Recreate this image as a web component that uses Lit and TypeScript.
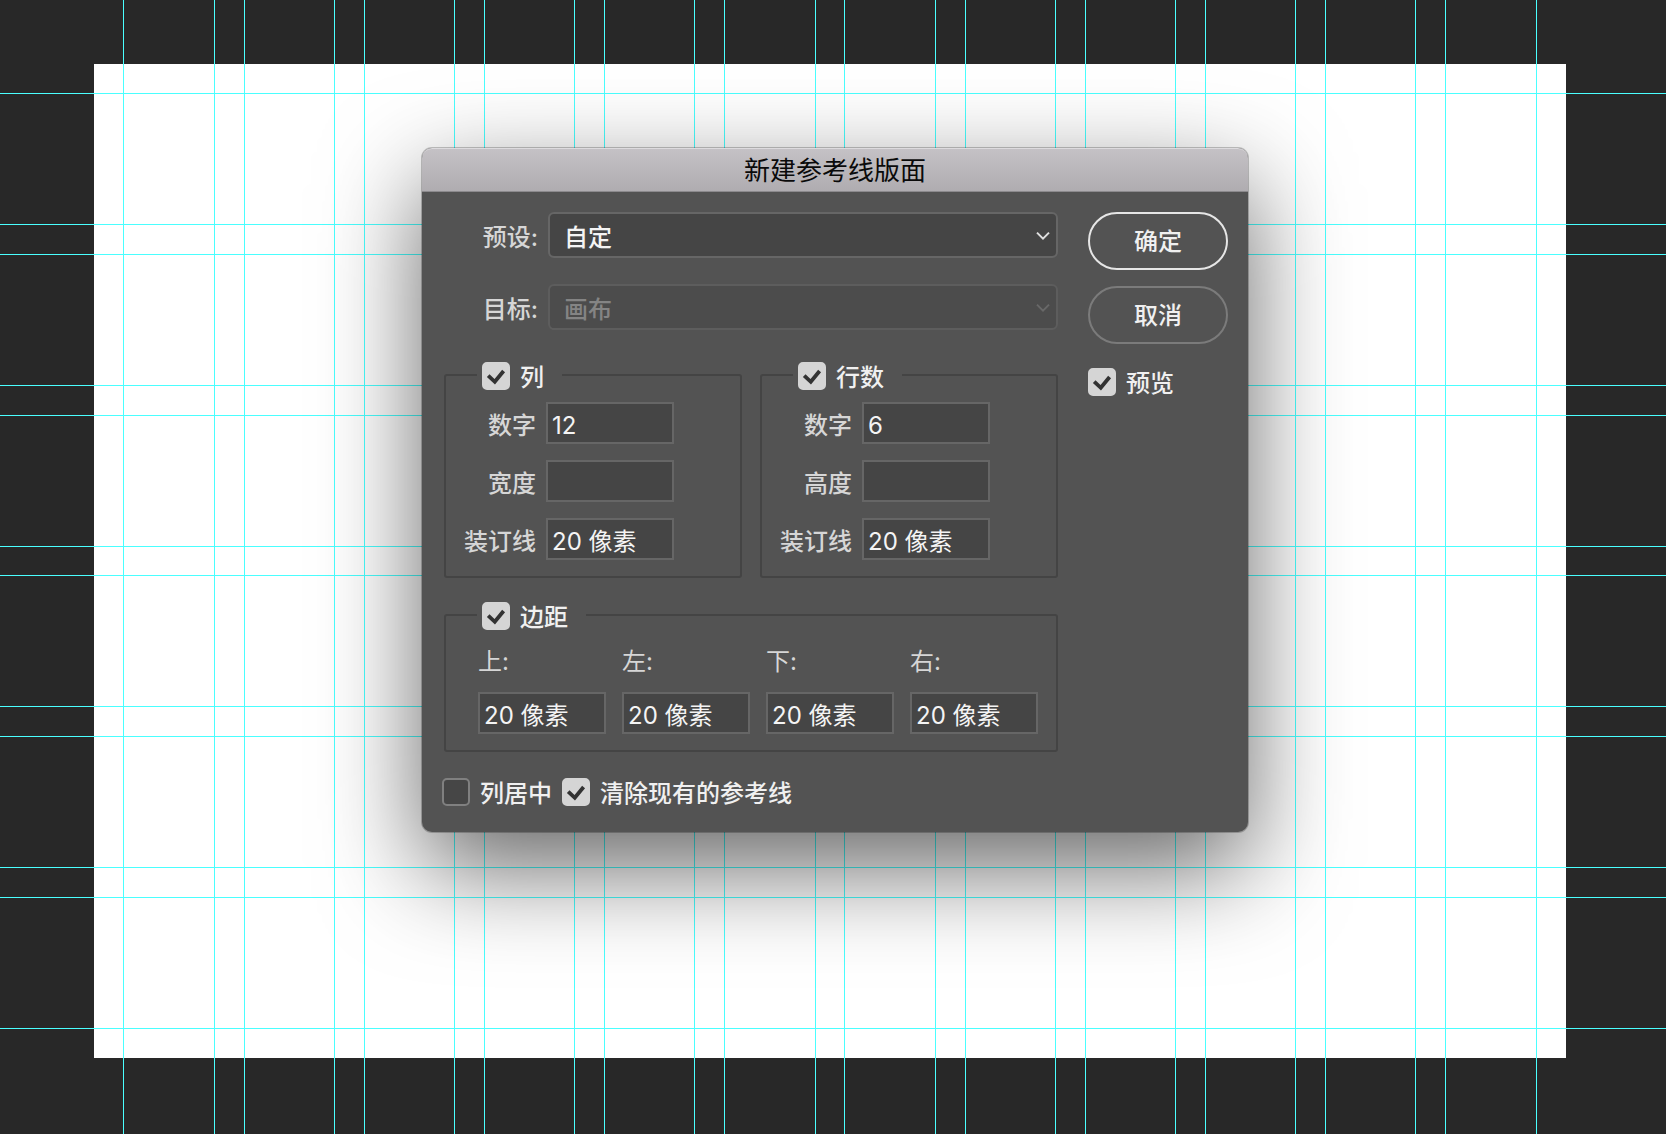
import { LitElement, html, svg, css } from "lit";
import { customElement, property, state } from "lit/decorators.js";
import { classMap } from "lit/directives/class-map.js";

/* Space between the window edge and the document canvas. */
const INSET = { top: 64, right: 100, bottom: 76, left: 94 };
const MARGIN = 30;
const GUTTER = 30;

function guides(origin: number, length: number, count: number): number[] {
  const pitch = length - 2 * MARGIN + GUTTER;
  const lines: number[] = [];
  for (let i = 0; i < count; i++) {
    const start = origin + MARGIN + (i * pitch) / count;
    const end = origin + MARGIN + ((i + 1) * pitch) / count - GUTTER;
    lines.push(Math.ceil(start) - 1, Math.floor(end));
  }
  return lines;
}

const FONT = css`
  font-family: Inter, "Noto Sans CJK SC", sans-serif;
`;

@customElement("guide-canvas")
class GuideCanvas extends LitElement {
  @property({ type: Number }) columns = 12;
  @property({ type: Number }) rows = 6;
  @state() private w = window.innerWidth;
  @state() private h = window.innerHeight;

  static styles = css`
    :host {
      display: grid;
      box-sizing: border-box;
      padding: 64px 100px 76px 94px;
      background: #282828;
    }
    .sheet {
      background: #fff;
    }
    .lines {
      position: absolute;
      inset: 0;
      width: 100%;
      height: 100%;
      fill: #4affff;
    }
  `;

  private measure = () => {
    this.w = this.clientWidth;
    this.h = this.clientHeight;
  };

  connectedCallback() {
    super.connectedCallback();
    window.addEventListener("resize", this.measure);
  }

  disconnectedCallback() {
    window.removeEventListener("resize", this.measure);
    super.disconnectedCallback();
  }

  render() {
    const xs = guides(INSET.left, this.w - INSET.left - INSET.right, this.columns);
    const ys = guides(INSET.top, this.h - INSET.top - INSET.bottom, this.rows);
    return html`
      <div class="sheet"></div>
      <svg class="lines" aria-hidden="true">
        ${xs.map((x) => svg`<rect x=${x} y="0" width="1" height="100%"></rect>`)}
        ${ys.map((y) => svg`<rect x="0" y=${y} width="100%" height="1"></rect>`)}
      </svg>
    `;
  }
}

@customElement("check-box")
class CheckBox extends LitElement {
  @property() label = "";
  @property({ type: Boolean }) checked = false;

  static styles = css`
    :host {
      display: block;
    }
    .wrap {
      display: flex;
      align-items: center;
      gap: 10px;
      height: 28px;
      ${FONT}
      font-size: 24px;
      font-weight: 500;
      line-height: 28px;
      color: #f0f0f0;
      white-space: nowrap;
    }
    .cell {
      display: grid;
      width: 28px;
      height: 28px;
    }
    .box,
    .tick {
      grid-area: 1 / 1;
      width: 28px;
      height: 28px;
    }
    .box {
      appearance: none;
      box-sizing: border-box;
      margin: 0;
      border: 2px solid #808080;
      border-radius: 5px;
      background: #464646;
    }
    .box:checked {
      border-color: #d5d5d5;
      background: #d5d5d5;
    }
    .tick {
      visibility: hidden;
      pointer-events: none;
      fill: none;
      stroke: #333;
      stroke-width: 3.8;
    }
    .box:checked + .tick {
      visibility: visible;
    }
    .text {
      padding-top: 4px;
    }
  `;

  render() {
    return html`
      <label class="wrap">
        <span class="cell">
          <input class="box" type="checkbox" .checked=${this.checked} />
          <svg class="tick" viewBox="0 0 28 28" aria-hidden="true">
            <path d="M6.2 13.6 L12.8 19.8 L21.6 9"></path>
          </svg>
        </span>
        <span class="text">${this.label}</span>
      </label>
    `;
  }
}

interface Field {
  id: string;
  label: string;
  value: string;
  unit?: string;
}

const COLUMN_FIELDS: Field[] = [
  { id: "col-count", label: "数字", value: "12" },
  { id: "col-width", label: "宽度", value: "" },
  { id: "col-gutter", label: "装订线", value: "20", unit: "像素" },
];

const ROW_FIELDS: Field[] = [
  { id: "row-count", label: "数字", value: "6" },
  { id: "row-height", label: "高度", value: "" },
  { id: "row-gutter", label: "装订线", value: "20", unit: "像素" },
];

const MARGIN_FIELDS: Field[] = [
  { id: "m-top", label: "上:", value: "20", unit: "像素" },
  { id: "m-left", label: "左:", value: "20", unit: "像素" },
  { id: "m-bottom", label: "下:", value: "20", unit: "像素" },
  { id: "m-right", label: "右:", value: "20", unit: "像素" },
];

@customElement("guide-dialog")
class GuideDialog extends LitElement {
  static styles = css`
    :host {
      display: block;
      border-radius: 10px;
      background: #535353;
      box-shadow:
        0 0 0 1px rgba(0, 0, 0, 0.22),
        0 36px 100px rgba(0, 0, 0, 0.6);
      ${FONT}
      font-size: 24px;
      line-height: 30px;
      color: #d6d6d6;
    }
    .title {
      box-sizing: border-box;
      height: 44px;
      margin: 0;
      border-top: 1px solid #dddbde;
      border-bottom: 1px solid #8c8a8d;
      border-radius: 10px 10px 0 0;
      background: linear-gradient(#c4c1c5, #afacb0);
      color: #0a0a0a;
      font-size: 26px;
      font-weight: 400;
      line-height: 44px;
      text-align: center;
    }
    .body {
      display: flex;
      gap: 30px;
      padding: 20px 20px 26px;
    }
    .main {
      flex: 1;
    }
    .row {
      display: flex;
      align-items: center;
      gap: 10px;
      margin-bottom: 26px;
    }
    .row-label {
      width: 96px;
      padding-top: 6px;
      font-weight: 500;
      text-align: right;
    }
    .drop {
      display: grid;
      flex: 1;
      align-items: center;
    }
    .select {
      grid-area: 1 / 1;
      appearance: none;
      box-sizing: border-box;
      width: 100%;
      height: 46px;
      margin: 0;
      padding: 5px 40px 0 14px;
      border: 2px solid #666;
      border-radius: 6px;
      background: #454545;
      color: #f4f4f4;
      font: inherit;
      font-weight: 500;
    }
    .select:disabled {
      border-color: #5d5d5d;
      background: #4c4c4c;
      color: #848484;
      opacity: 1;
    }
    .chevron {
      grid-area: 1 / 1;
      justify-self: end;
      width: 14px;
      height: 10px;
      margin-right: 8px;
      pointer-events: none;
      fill: none;
      stroke: #e0e0e0;
      stroke-width: 2;
    }
    .select:disabled + .chevron {
      stroke: #686868;
    }
    .pair {
      display: grid;
      grid-template-columns: 1fr 1fr;
      gap: 18px;
      margin: 30px 0 22px 2px;
    }
    .group {
      min-width: 0;
      margin: 0;
      padding: 12px 0 16px;
      border: 2px solid #444;
      border-radius: 3px;
    }
    .legend {
      box-sizing: border-box;
      height: 30px;
      margin-left: 31px;
      padding: 2px 18px 0 5px;
    }
    .fields {
      display: grid;
      gap: 16px;
    }
    .field {
      display: flex;
      align-items: center;
      gap: 10px;
    }
    .field-label {
      width: 90px;
      padding-top: 6px;
      font-weight: 500;
      text-align: right;
    }
    .input {
      box-sizing: border-box;
      width: 128px;
      height: 42px;
      margin: 0;
      padding: 4px 4px 0;
      border: 2px solid #666;
      border-radius: 0;
      outline: none;
      background: #454545;
      color: #f4f4f4;
      font: inherit;
    }
    /* The fallback font of the unit sits lower in the line than the digits. */
    .with-unit {
      padding-top: 0;
    }
    .wide {
      margin: 0 0 26px 2px;
      padding-top: 17px;
    }
    .margins {
      display: flex;
      gap: 16px;
      padding-left: 32px;
    }
    .edge {
      display: grid;
      gap: 15px;
    }
    .options {
      display: flex;
      gap: 10px;
    }
    .side {
      display: flex;
      flex-direction: column;
      gap: 16px;
      width: 140px;
    }
    .button {
      box-sizing: border-box;
      height: 58px;
      padding: 2px 0 0;
      border: 2px solid #7b7b7b;
      border-radius: 29px;
      background: none;
      color: #f0f0f0;
      font: inherit;
      font-weight: 500;
    }
    .primary {
      border-color: #e6e6e6;
    }
    .preview {
      margin-top: 8px;
    }
  `;

  private drop(id: string, label: string, value: string, disabled: boolean) {
    return html`
      <div class="row">
        <label class="row-label" for=${id}>${label}</label>
        <div class="drop">
          <select class="select" id=${id} ?disabled=${disabled}>
            <option>${value}</option>
          </select>
          <svg class="chevron" viewBox="0 0 14 10" aria-hidden="true">
            <path d="M1 2.6 L7 8.6 L13 2.6"></path>
          </svg>
        </div>
      </div>
    `;
  }

  private input(f: Field) {
    return html`<input
      class=${classMap({ input: true, "with-unit": !!f.unit })}
      id=${f.id}
      type="text"
      .value=${f.unit ? `${f.value} ${f.unit}` : f.value}
    />`;
  }

  private group(title: string, fields: Field[]) {
    return html`
      <fieldset class="group">
        <legend class="legend"><check-box label=${title} checked></check-box></legend>
        <div class="fields">
          ${fields.map(
            (f) => html`
              <div class="field">
                <label class="field-label" for=${f.id}>${f.label}</label>
                ${this.input(f)}
              </div>
            `
          )}
        </div>
      </fieldset>
    `;
  }

  render() {
    return html`
      <h1 class="title">新建参考线版面</h1>
      <div class="body">
        <div class="main">
          ${this.drop("preset", "预设:", "自定", false)}
          ${this.drop("target", "目标:", "画布", true)}
          <div class="pair">
            ${this.group("列", COLUMN_FIELDS)} ${this.group("行数", ROW_FIELDS)}
          </div>
          <fieldset class="group wide">
            <legend class="legend"><check-box label="边距" checked></check-box></legend>
            <div class="margins">
              ${MARGIN_FIELDS.map(
                (f) => html`
                  <div class="edge">
                    <label for=${f.id}>${f.label}</label>
                    ${this.input(f)}
                  </div>
                `
              )}
            </div>
          </fieldset>
          <div class="options">
            <check-box label="列居中"></check-box>
            <check-box label="清除现有的参考线" checked></check-box>
          </div>
        </div>
        <div class="side">
          <button class="button primary" type="button">确定</button>
          <button class="button" type="button">取消</button>
          <check-box class="preview" label="预览" checked></check-box>
        </div>
      </div>
    `;
  }
}

@customElement("app-root")
class AppRoot extends LitElement {
  static styles = css`
    :host {
      display: grid;
      position: relative;
      min-height: 100vh;
      overflow: hidden;
    }
    .window {
      position: absolute;
      top: 148px;
      left: 422px;
      width: 826px;
    }
  `;

  render() {
    return html`
      <guide-canvas columns="12" rows="6"></guide-canvas>
      <guide-dialog class="window" role="dialog" aria-label="新建参考线版面"></guide-dialog>
    `;
  }
}
